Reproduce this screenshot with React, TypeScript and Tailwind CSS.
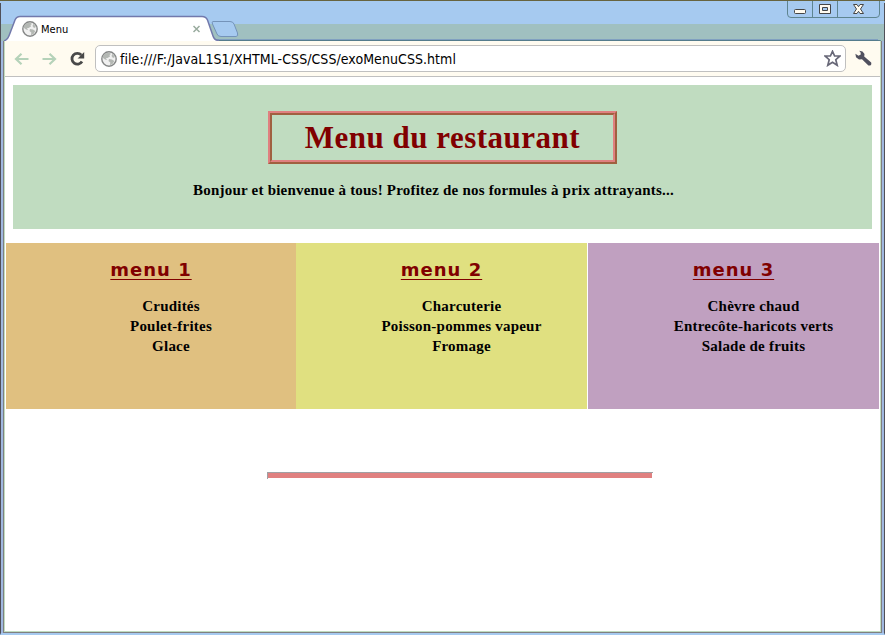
import React from "react";

const SERIF = "font-['Liberation_Serif',serif]";
const UI = "font-['DejaVu_Sans_Condensed','DejaVu_Sans',sans-serif]";

function Globe() {
  return (
    <svg className="block shrink-0" width="16" height="16" viewBox="0 0 16 16">
      <circle cx="8" cy="8" r="7.2" fill="#f0f0f0" stroke="#858787" strokeWidth="1.4" />
      <path d="M2 5 L4 2.5 L8 1.6 L10 3 L8.5 4 L9 5.5 L6.5 7 L5 7 L6 9 L4 8.5 L2 7Z" fill="#b4b8b4" />
      <path d="M8 8 L11 8.5 L13.3 10 L11.5 13 L9 14.3 L9.3 11.5 L7.5 10Z M11.5 2.8 L14 6 L12 7 L10.5 5Z" fill="#b4b8b4" />
    </svg>
  );
}

function TitleBar() {
  return (
    <header className="relative h-[41px] shrink-0 overflow-hidden">
      <svg className="absolute inset-0" width="885" height="41" viewBox="0 0 885 41">
        <rect width="885" height="25" fill="#a6caf0" />
        <rect y="24" width="885" height="17" fill="#a0c0c0" />
        <path d="M0 .5H885" stroke="#67643f" />
        <path d="M.5 3V41M884.5 3V41" stroke="#505058" />
        <path d="M213 40.5H878Q881 40.5 881 41" fill="none" stroke="#557c8c" />
        <path d="M213 39.5H878" stroke="#80a0c0" />
        <path d="M4 41C9 39 9 35 12 28L15 20Q16.5 16.5 20 16.5H202Q206 16.5 207.5 20L213 36Q214.5 40.5 219 40.5V41Z" fill="#fff" />
        <path d="M4 41C9 39 9 35 12 28L15 20Q16.5 16.5 20 16.5H202Q206 16.5 207.5 20L213 36Q214.5 40.5 219 40.5" fill="none" stroke="#7279ac" strokeWidth="1.5" />
        <path d="M213 21.5H230Q233 21.5 234 24L237.5 33Q238.5 36.5 236 36.5H221Q218 36.5 217 34L212.5 24Q211.5 21.5 213 21.5Z" fill="#a6caf0" stroke="#7493b9" />
        <path d="M787.5 1V14Q787.5 17.5 791 17.5H876Q879.5 17.5 879.5 14V1M812.5 1V17M837.5 1V17" fill="none" stroke="#5e8590" />
        <rect x="794.5" y="9.5" width="11" height="4" rx="1" fill="#fffbf0" stroke="#464646" />
        <path d="M819.5 4.5H830.5V13.5H819.5Z M822.5 7.5V10.5H827.5V7.5Z" fill="#fffbf0" fillRule="evenodd" stroke="#464646" />
        <path d="M853.5 4.5H857L858.5 6.7L860 4.5H863.5L860.5 9L863.5 13.5H860L858.5 11.3L857 13.5H853.5L856.5 9Z" fill="#fffbf0" stroke="#464646" />
      </svg>
      <div className="relative flex h-[41px] w-[208px] items-center gap-[3px] pt-[17px] pl-[22px]">
        <Globe />
        <span className={`${UI} w-[149px] pt-px text-[11px] leading-4`}>Menu</span>
        <svg className="block shrink-0" width="8" height="8" viewBox="0 0 8 8">
          <path d="M.5 1L6.5 7M6.5 1L.5 7" stroke="#98aa9d" strokeWidth="1.5" />
        </svg>
      </div>
    </header>
  );
}

function Toolbar() {
  return (
    <div className="flex h-9 shrink-0 items-center border-b border-[#c0c0c0] bg-[#fffbf0] pl-[9px]">
      <svg className="block shrink-0" width="16" height="16" viewBox="0 0 16 16">
        <path d="M14.5 8H2M7.5 2.8L2 8L7.5 13.2" fill="none" stroke="#b5d2b9" strokeWidth="2.2" />
      </svg>
      <svg className="ml-3 block shrink-0" width="16" height="16" viewBox="0 0 16 16">
        <path d="M.5 8H13M7.5 2.8L13 8L7.5 13.2" fill="none" stroke="#b5d2b9" strokeWidth="2.2" />
      </svg>
      <svg className="ml-[11px] block shrink-0" width="16" height="16" viewBox="0 0 16 16">
        <path d="M12.3 4A5.4 5.4 0 1 0 13 10.5" fill="none" stroke="#494949" strokeWidth="2.8" />
        <path d="M15.2 1V7.6H8.6Z" fill="#494949" />
      </svg>
      <div className="ml-[10px] flex h-[27px] w-[751px] items-center rounded-[5px] border border-[#c0c0c0] bg-white pr-1 pl-[5px]">
        <Globe />
        <span className={`${UI} ml-[3px] grow text-[14px] leading-5 tracking-[0.06px] whitespace-nowrap`}>
          file:///F:/JavaL1S1/XHTML-CSS/CSS/exoMenuCSS.html
        </span>
        <svg className="block shrink-0" width="17" height="17" viewBox="0 0 17 17">
          <path d="M8.5 1.3L10.6 6H15.9L11.8 9.7L13.2 15.3L8.5 12.3L3.8 15.3L5.2 9.7L1.1 6H6.4Z" fill="#fff" stroke="#686878" strokeWidth="1.7" />
        </svg>
      </div>
      <svg className="ml-[9px] block shrink-0" width="17" height="17" viewBox="0 0 17 17">
        <path d="M4.2 .8L7.5 1.5L9.5 4L9.2 6.4L16.2 12.4Q17 15.8 13.4 15.6L7 9.2L4 9.4L1 7.2L.4 3.8L3.5 5.8L5.8 4.5L5.6 2.5Z" fill="#50505e" />
      </svg>
    </div>
  );
}

function MenuCard({ title, dishes, className }: { title: string; dishes: string[]; className: string }) {
  return (
    <section className={`h-[166px] pt-[15px] text-center ${className}`}>
      <h2 className="font-['DejaVu_Sans',sans-serif] text-[18px] leading-6 font-bold tracking-[1px] text-[#800000] underline decoration-1 underline-offset-[3px]">
        {title}
      </h2>
      <ul className={`${SERIF} mt-[14px] pl-10 text-[15px] leading-5 font-bold tracking-[0.22px] text-black`}>
        {dishes.map((dish) => (
          <li key={dish}>{dish}</li>
        ))}
      </ul>
    </section>
  );
}

export default function App() {
  return (
    <div className="flex h-[635px] w-[885px] flex-col overflow-hidden bg-[#a6caf0]">
      <TitleBar />
      <div className="flex min-h-0 grow border-x border-b-2 border-x-[#505058] border-b-[#a6caf0]">
        <div className="w-0.5 shrink-0 bg-[#a0b8e0]" />
        <div className="flex min-w-0 grow flex-col border-x border-b border-[#808080]">
          <div className="flex grow flex-col border-x border-b border-[#c0dcc0] bg-white">
            <Toolbar />
            <main className="flex flex-col">
              <section className={`${SERIF} mt-2 ml-2 flex h-[144px] w-[859px] flex-col items-center bg-[#c0dcc0] pt-[26px] font-bold`}>
                <div className="border-2 border-t-[#e08080] border-r-[#a06040] border-b-[#a06040] border-l-[#e08080]">
                  <h1 className="flex h-[49px] w-[345px] items-center justify-center border-2 border-t-[#a06040] border-r-[#e08080] border-b-[#e08080] border-l-[#a06040] text-[31px] leading-9 tracking-[0.5px] text-[#800000]">
                    Menu du restaurant
                  </h1>
                </div>
                <p className="mt-4 mr-[18px] text-[15px] leading-5 tracking-[0.21px] whitespace-nowrap text-black">
                  Bonjour et bienvenue à tous! Profitez de nos formules à prix attrayants...
                </p>
              </section>
              <div className="mt-[14px] ml-px flex">
                <MenuCard title="menu 1" dishes={["Crudités", "Poulet-frites", "Glace"]} className="w-[290px] bg-[#e0c080]" />
                <MenuCard title="menu 2" dishes={["Charcuterie", "Poisson-pommes vapeur", "Fromage"]} className="w-[291px] bg-[#e0e080]" />
                <MenuCard title="menu 3" dishes={["Chèvre chaud", "Entrecôte-haricots verts", "Salade de fruits"]} className="ml-px w-[291px] bg-[#c0a0c0]" />
              </div>
              <div className="mt-[63px] ml-[262px] h-[7px] w-[386px] border-t border-l border-[#a0a0a4] pr-px pb-px">
                <div className="h-[5px] bg-[#e08080]" />
              </div>
            </main>
          </div>
        </div>
        <div className="w-0.5 shrink-0 bg-[#a0b8e0]" />
      </div>
    </div>
  );
}
